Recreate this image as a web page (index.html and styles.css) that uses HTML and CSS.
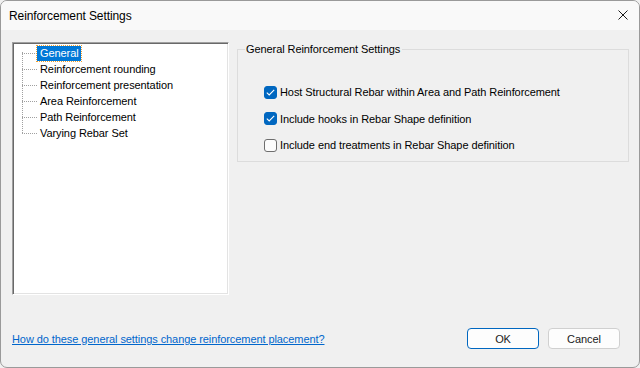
FILE: index.html
```html
<!DOCTYPE html>
<html lang="en">
<head>
    <meta charset="UTF-8">
    <title>Reinforcement Settings</title>
    <link rel="stylesheet" href="styles.css">
</head>
<body>
    <div class="dialog">
        <div class="title-bar">
            <span class="title">Reinforcement Settings</span>
            <button type="button" class="close-btn" aria-label="Close">
                <svg width="10" height="10" viewBox="0 0 10 10" fill="none" stroke="#1a1a1a" stroke-width="1"><line x1="0.5" y1="0.5" x2="9.5" y2="9.5"/><line x1="9.5" y1="0.5" x2="0.5" y2="9.5"/></svg>
            </button>
        </div>
        <div class="dialog-body">
            <div class="tree">
                <ul class="tree-list">
                    <li class="tree-item"><span class="branch"></span><span class="label selected">General</span></li>
                    <li class="tree-item"><span class="branch"></span><span class="label">Reinforcement rounding</span></li>
                    <li class="tree-item"><span class="branch"></span><span class="label">Reinforcement presentation</span></li>
                    <li class="tree-item"><span class="branch"></span><span class="label">Area Reinforcement</span></li>
                    <li class="tree-item"><span class="branch"></span><span class="label">Path Reinforcement</span></li>
                    <li class="tree-item"><span class="branch"></span><span class="label">Varying Rebar Set</span></li>
                </ul>
            </div>
            <fieldset class="group">
                <legend>General Reinforcement Settings</legend>
                <div class="checks">
                    <label class="check-row"><span class="box checked"><svg width="9" height="7" viewBox="0 0 9 7" fill="none" stroke="#fff" stroke-width="1.1"><polyline points="0.8,3.6 3.2,6 8.2,0.8"/></svg></span>Host Structural Rebar within Area and Path Reinforcement</label>
                    <label class="check-row"><span class="box checked"><svg width="9" height="7" viewBox="0 0 9 7" fill="none" stroke="#fff" stroke-width="1.1"><polyline points="0.8,3.6 3.2,6 8.2,0.8"/></svg></span>Include hooks in Rebar Shape definition</label>
                    <label class="check-row"><span class="box"></span>Include end treatments in Rebar Shape definition</label>
                </div>
            </fieldset>
        </div>
        <div class="dialog-footer">
            <a href="#" class="help-link">How do these general settings change reinforcement placement?</a>
            <div class="buttons">
                <button type="button" class="btn btn-default">OK</button>
                <button type="button" class="btn">Cancel</button>
            </div>
        </div>
    </div>
</body>
</html>
```

FILE: styles.css
```css
html, body {
    margin: 0;
    padding: 0;
    background: #f0f0f0;
    font-family: 'Liberation Sans', Arial, sans-serif;
    font-size: 11px;
    letter-spacing: -0.08px;
    color: #000;
}
.dialog {
    width: 640px;
    height: 368px;
    box-sizing: border-box;
    border: 1px solid #9a9a9a;
    border-radius: 7px;
    background: #f0f0f0;
    display: flex;
    flex-direction: column;
    overflow: hidden;
}
.title-bar {
    height: 29px;
    background: #f9f9f9;
    display: flex;
    align-items: center;
    justify-content: space-between;
    padding: 0 10px 0 8px;
}
.title {
    font-size: 12px;
    letter-spacing: -0.1px;
}
.close-btn {
    background: none;
    border: none;
    padding: 0;
    width: 12px;
    height: 12px;
    display: flex;
    align-items: center;
    justify-content: center;
    margin-top: -2px;
}
.dialog-body {
    display: flex;
    align-items: flex-start;
    gap: 8px;
    padding: 12px 10px 0 11px;
}
.tree {
    width: 217px;
    height: 253px;
    box-sizing: border-box;
    background: #fff;
    border: 1px solid;
    border-color: #a0a0a0 #fff #fff #a0a0a0;
    box-shadow: inset 1px 1px #696969, inset -1px -1px #e3e3e3;
    padding: 2px 0 0 2px;
}
.tree-list {
    list-style: none;
    margin: 0;
    padding: 0 0 0 7px;
    position: relative;
}
.tree-list::before {
    content: "";
    position: absolute;
    left: 7px;
    top: 7px;
    bottom: 8px;
    border-left: 1px dotted #a0a0a0;
}
.tree-item {
    height: 16px;
    display: flex;
    align-items: center;
}
.branch {
    width: 15px;
    border-top: 1px dotted #a0a0a0;
    margin-top: 1px;
}
.label {
    padding: 0 2px 0 3px;
    line-height: 15px;
    white-space: nowrap;
}
.label.selected {
    background: #0078d7;
    color: #fff;
    outline: 1px dotted #f0a030;
}
.group {
    margin: 1px 0 0 0;
    width: 392px;
    height: 119px;
    box-sizing: border-box;
    border: 1px solid #dcdcdc;
    padding: 0 0 0 7px;
}
.group legend {
    padding: 0 2px 0 1px;
}
.checks {
    display: flex;
    flex-direction: column;
    gap: 8.5px;
    padding: 28px 0 0 19px;
}
.check-row {
    display: flex;
    align-items: center;
    gap: 3px;
    height: 18px;
    white-space: nowrap;
}
.box {
    width: 13px;
    height: 13px;
    box-sizing: border-box;
    border: 1px solid #6e6e6e;
    border-radius: 3px;
    background: #fcfcfc;
    display: flex;
    align-items: center;
    justify-content: center;
}
.box.checked {
    background: #0067c0;
    border-color: #0067c0;
}
.dialog-footer {
    display: flex;
    align-items: center;
    justify-content: space-between;
    padding: 33px 19px 0 11px;
}
.help-link {
    color: #0066cc;
    text-decoration: underline;
}
.buttons {
    display: flex;
    gap: 9px;
}
.btn {
    width: 72px;
    height: 21px;
    box-sizing: border-box;
    border: 1px solid #d0d0d0;
    border-radius: 4px;
    background: #fdfdfd;
    font-family: inherit;
    font-size: 11px;
    letter-spacing: inherit;
    color: #1a1a1a;
    padding: 0;
}
.btn-default {
    border-color: #0067c0;
}
```
